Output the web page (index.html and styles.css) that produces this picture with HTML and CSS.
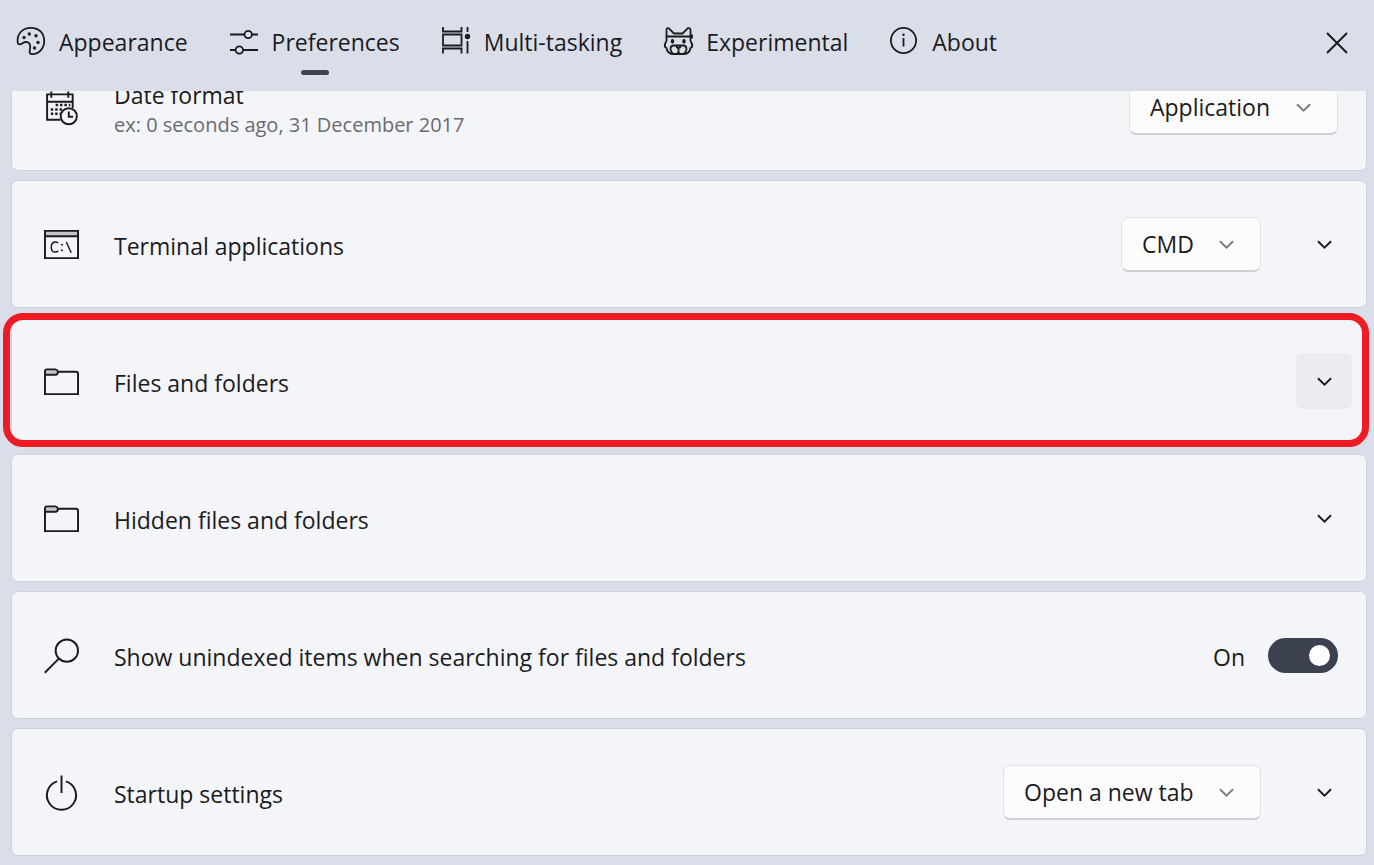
FILE: index.html
```html
<!DOCTYPE html>
<html lang="en">
<head>
<meta charset="utf-8">
<meta name="viewport" content="width=device-width, initial-scale=1">
<title>Settings</title>
<link rel="stylesheet" href="styles.css">
</head>
<body>
<header class="header">
  <nav class="tabs" aria-label="Settings sections">
    <button class="tab" type="button">
      <svg class="tab-icon" viewBox="0 0 28 28"><path d="M.8 16C-.6 7.500 5 .8 13.800.8S27.200 6.500 27.200 14 21.800 27.200 15.500 27.200c-2.800 0-3.300-1.700-2.700-4 .8-3.300.7-6.200-1.600-7.600-2-1.200-3.700-.6-5.700.7C3.500 17.600 1.200 17.900.8 16Z"/><g class="solid"><circle cx="7" cy="10.500" r="1.700"/><circle cx="12.300" cy="7" r="1.700"/><circle cx="19" cy="8.700" r="1.700"/><circle cx="21" cy="15.500" r="1.700"/><circle cx="17.500" cy="21" r="1.700"/></g></svg>
      <span>Appearance</span>
    </button>
    <button class="tab tab-current" type="button" aria-current="page">
      <svg class="tab-icon" viewBox="0 0 28 28"><path d="M0 7.500h14.500M22 7.500h6M0 23h5.500M13 23h15"/><circle cx="18.200" cy="7.500" r="3.700"/><circle cx="9.300" cy="23" r="3.700"/></svg>
      <span>Preferences</span>
    </button>
    <button class="tab" type="button">
      <svg class="tab-icon" viewBox="0 0 28 28"><path d="M1 0v4.500h18.500V0M1 7.500h18.500v11H1ZM1 26.500v-5h18.500v5M25.500 0v5M25.500 14v12.500"/><circle class="solid" cx="25.500" cy="9.500" r="2.700"/></svg>
      <span>Multi-tasking</span>
    </button>
    <button class="tab" type="button">
      <svg class="tab-icon" viewBox="0 0 28 28"><path d="M2.500 14V3Q2.500.8 4.500 1.200L10 6.500h8.500L24 1.200q2.500-.4 2.500 1.800v11M1.500 9.500h26M28 7.500v4M2.500 14Q0 17.500 1 20l1.500 1Q3.500 27.200 9.500 27.200h10Q25.500 27.200 26.500 21l1.500-1q1-2.500-1.500-6"/><path d="M10 18.500h9q3.500 0 3.500 3.500-.5 4.500-4.500 5.200-2.500 0-3.500-2-1 2-3.500 2-4-.7-4.500-5.200 0-3.500 3.500-3.500ZM12.500 18.500q0 2.500 2 2.500t2-2.500M14.500 21v4"/><g class="solid"><ellipse cx="8.500" cy="14.300" rx="1.700" ry="2.400"/><ellipse cx="20" cy="14.300" rx="1.700" ry="2.400"/></g></svg>
      <span>Experimental</span>
    </button>
    <button class="tab" type="button">
      <svg class="tab-icon" viewBox="0 0 28 28"><circle cx="13.500" cy="13.500" r="12.600"/><path d="M13.500 11v8.500"/><circle class="solid" cx="13.500" cy="7.800" r="1.200"/></svg>
      <span>About</span>
    </button>
  </nav>
  <button class="close" type="button" aria-label="Close">
    <svg class="close-icon" viewBox="0 0 20 20"><path d="M0 0 20 20M20 0 0 20"/></svg>
  </button>
</header>

<main class="content">
  <div class="settings">
    <section class="card">
      <svg class="card-icon" viewBox="0 0 36 36"><path d="M17 30.500H3.200V4.500H29.500v14M3.200 12H29.500M7.500 1.500V8M25 1.500V8"/><path class="dots" d="M12 15.500h15M7 20h12M7 24.500h10"/><circle cx="25.500" cy="27" r="8.300"/><path d="M25.500 22v5.500h4.500"/></svg>
      <div class="card-text">
        <label class="title" for="date-format">Date format</label>
        <p class="caption">ex: 0 seconds ago, 31 December 2017</p>
      </div>
      <div class="dropdown">
        <select id="date-format"><option>Application</option></select>
        <svg class="chevron" viewBox="0 0 16 16"><path d="m1 4.500 7 7 7-7"/></svg>
      </div>
    </section>

    <section class="card card-expandable">
      <svg class="card-icon" viewBox="0 0 36 36"><path class="shade" d="M1 4h34v5H1Z"/><path d="M1 4h34v28H1ZM1 9.500h34"/><path class="thin" d="M14.500 16.500Q13 15 10.800 15.500C6 17 6.500 26 11.500 25.800q2 0 3.200-1M23 15.500l5 11"/><circle class="solid" cx="18.500" cy="18.200" r="1"/><circle class="solid" cx="18.500" cy="24" r="1"/></svg>
      <div class="card-text"><label class="title" for="terminal">Terminal applications</label></div>
      <div class="dropdown">
        <select id="terminal"><option>CMD</option></select>
        <svg class="chevron" viewBox="0 0 16 16"><path d="m1 4.500 7 7 7-7"/></svg>
      </div>
      <button class="expand" type="button" aria-label="Expand terminal applications"><svg class="chevron-dark" viewBox="0 0 16 16"><path d="m1 4.500 7 7 7-7"/></svg></button>
    </section>

    <section class="card card-expandable card-marked">
      <svg class="card-icon" viewBox="0 0 36 36"><path class="shade" d="M2 6h10l2 2-2 2H2Z"/><path d="M1 31V8q0-2.500 2-2.500h8.500q1.800 0 3 2.500H33q2 0 2 2v21ZM1 11h11q2 0 2.500-3"/></svg>
      <div class="card-text"><h2 class="title">Files and folders</h2></div>
      <button class="expand expand-hover" type="button" aria-label="Expand files and folders"><svg class="chevron-dark" viewBox="0 0 16 16"><path d="m1 4.500 7 7 7-7"/></svg></button>
    </section>

    <section class="card card-expandable">
      <svg class="card-icon" viewBox="0 0 36 36"><path class="shade" d="M2 6h10l2 2-2 2H2Z"/><path d="M1 31V8q0-2.500 2-2.500h8.500q1.800 0 3 2.500H33q2 0 2 2v21ZM1 11h11q2 0 2.500-3"/></svg>
      <div class="card-text"><h2 class="title">Hidden files and folders</h2></div>
      <button class="expand" type="button" aria-label="Expand hidden files and folders"><svg class="chevron-dark" viewBox="0 0 16 16"><path d="m1 4.500 7 7 7-7"/></svg></button>
    </section>

    <section class="card">
      <svg class="card-icon" viewBox="0 0 36 36"><circle cx="23.500" cy="13" r="11.500"/><path d="M15.500 21 .8 35.700"/></svg>
      <div class="card-text"><label class="title" for="unindexed">Show unindexed items when searching for files and folders</label></div>
      <span class="state">On</span>
      <input class="switch" id="unindexed" type="checkbox" role="switch" checked>
    </section>

    <section class="card card-expandable">
      <svg class="card-icon" viewBox="0 0 36 36"><path d="M18 .5v18M13.500 6.500a15 15 0 1 0 9 0"/></svg>
      <div class="card-text"><label class="title" for="startup">Startup settings</label></div>
      <div class="dropdown">
        <select id="startup"><option>Open a new tab</option></select>
        <svg class="chevron" viewBox="0 0 16 16"><path d="m1 4.500 7 7 7-7"/></svg>
      </div>
      <button class="expand" type="button" aria-label="Expand startup settings"><svg class="chevron-dark" viewBox="0 0 16 16"><path d="m1 4.500 7 7 7-7"/></svg></button>
    </section>
  </div>
</main>
</body>
</html>
```
FILE: styles.css
```css
* {
  box-sizing: border-box;
}

body {
  margin: 0;
  height: 100vh;
  display: flex;
  flex-direction: column;
  overflow: hidden;
  background: #dadee9;
  color: #1b1b1d;
  font-family: "Open Sans", "Noto Sans", sans-serif;
  font-size: 23px;
  line-height: 32px;
}

button,
select {
  margin: 0;
  border: 0;
  background: none;
  color: inherit;
  font: inherit;
}

svg {
  display: block;
  flex: none;
  overflow: visible;
  fill: none;
  stroke: #1b1b1d;
  stroke-width: 2;
}

.solid {
  fill: #1b1b1d;
  stroke: none;
}

.shade {
  fill: #c3c4c8;
  stroke: none;
}

.thin {
  stroke-width: 1.5;
}

.dots {
  stroke-width: 2.5;
  stroke-dasharray: 2.5 2;
}

.header {
  flex: none;
  height: 91px;
  padding: 0 27px 8px 17px;
  display: flex;
  align-items: center;
  justify-content: space-between;
}

.tabs {
  display: flex;
  gap: 42px;
}

.tab {
  position: relative;
  padding: 20px 0;
  display: flex;
  align-items: center;
  gap: 14px;
  white-space: nowrap;
}

.tab-icon {
  width: 28px;
  height: 28px;
  margin-bottom: 2px;
  stroke-width: 1.8;
}

.tab-current::after {
  content: "";
  position: absolute;
  left: 50%;
  bottom: 3px;
  width: 28px;
  height: 5px;
  margin-left: -14px;
  border-radius: 3px;
  background: #3f4455;
}

.close {
  padding: 2px 0 0;
}

.close-icon {
  width: 20px;
  height: 20px;
}

.content {
  flex: 1;
  min-height: 0;
  overflow: hidden;
}

.settings {
  margin: -48px 7px 0 11px;
  display: flex;
  flex-direction: column;
  gap: 9px;
}

.card {
  position: relative;
  min-height: 128px;
  padding: 0 28px 0 32px;
  display: flex;
  align-items: center;
  border: 1px solid #cdd2df;
  border-radius: 7px;
  background: #f4f5f9;
}

.card-expandable {
  padding-right: 14px;
}

.card-marked::after {
  content: "";
  position: absolute;
  inset: -5px -3px -3px -9px;
  border: 7px solid #ed1c24;
  border-radius: 20px;
  pointer-events: none;
}

.card-icon {
  width: 35px;
  height: 35px;
}

.card-text {
  flex: 1;
  padding: 4px 0 0 35px;
}

.title {
  display: block;
  margin: 0;
  font-size: 23px;
  font-weight: 400;
}

.caption {
  margin: 0;
  color: #6a6b6f;
  font-size: 20px;
  line-height: 28px;
}

.dropdown {
  position: relative;
}

.dropdown select {
  appearance: none;
  display: block;
  height: 55px;
  padding: 0 66px 0 20px;
  border: 1px solid #e2e3e7;
  border-bottom: 2px solid #cfd0d4;
  border-radius: 7px;
  background: #fcfcfd;
}

.chevron {
  position: absolute;
  top: 20px;
  right: 27px;
  width: 15px;
  height: 15px;
  stroke: #7b7c80;
  pointer-events: none;
}

.expand {
  width: 56px;
  height: 56px;
  padding: 0;
  display: flex;
  align-items: center;
  justify-content: center;
  border-radius: 7px;
}

.expand-hover {
  background: #ebecef;
}

.dropdown + .expand {
  margin-left: 35px;
}

.chevron-dark {
  width: 15px;
  height: 15px;
}

.state {
  margin-right: 23px;
  padding-top: 4px;
}

.switch {
  appearance: none;
  width: 70px;
  height: 35px;
  margin: 0;
  padding: 0 8px;
  display: flex;
  align-items: center;
  border-radius: 18px;
  background: #3c4150;
}

.switch::before {
  content: "";
  width: 21px;
  height: 21px;
  border-radius: 50%;
  background: #fff;
}

.switch:checked {
  justify-content: flex-end;
}
```
